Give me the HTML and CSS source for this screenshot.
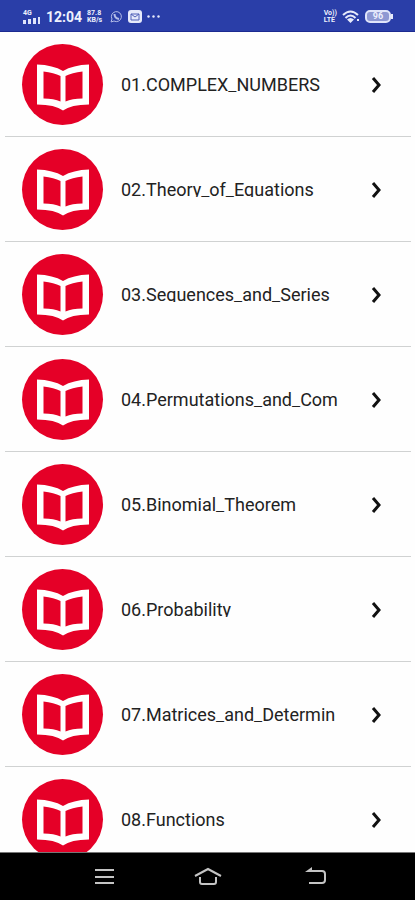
FILE: index.html
```
<!doctype html>
<html lang="en">
	<head>
		<meta charset="UTF-8">
		<meta name="viewport" content="width=device-width, initial-scale=1">
		<title>Chapters</title>
		<link rel="stylesheet" href="styles.css">
	</head>
	<body>
		<!-- shared icons -->
		<svg class="sprite" aria-hidden="true">
			<symbol id="book" viewBox="0 0 81 81">
				<path fill="#fff" fill-rule="evenodd" d="M15 20.500Q31 21 41 27Q51 21 67 20.500V60.500Q49 60.500 41 66.500Q33 60.500 15 60.500ZM21.500 27.500V54.500Q32 54.500 38.500 57.500V32Q32 28.500 21.500 27.500ZM60.500 27.500Q50 28.500 43.500 32V57.500Q50 54.500 60.500 54.500Z"/>
			</symbol>
			<symbol id="chevron" viewBox="0 0 12 18">
				<path fill="none" stroke="#111" stroke-width="3" d="M2 2L8 9L2 16"/>
			</symbol>
		</svg>
		<header class="status">
			<div class="status-group">
				<div class="network">
					<span class="tiny">4G</span>
					<svg width="18" height="7" viewBox="0 0 18 7" fill="#dfe4fa">
						<path d="M0 3h3v4H0zM5 2h3v5H5zM10 1h3v6h-3zM15 0h2v7h-2z"/>
					</svg>
				</div>
				<span class="clock">12:04</span>
				<div class="speed tiny"><span>87.8</span><span>KB/s</span></div>
				<svg class="chat" width="13" height="13" viewBox="0 0 13 13" fill="none" stroke="#b4bde8">
					<path d="M1 12L2 9A5 5 0 1 1 4 11Z"/>
					<path stroke-width="2" d="M4.500 4C4.500 7 6 8.500 9 9"/>
				</svg>
				<svg class="mail" width="14" height="13" viewBox="0 0 14 13">
					<rect width="14" height="13" rx="3" fill="#e6eafb"/>
					<path fill="none" stroke="#5060b8" d="M3 4h8v6H3zM3 4l4 3l4-3"/>
				</svg>
				<svg width="13" height="3" viewBox="0 0 13 3" fill="#e6eafb">
					<circle cx="1.500" cy="1.500" r="1.200"/><circle cx="6.500" cy="1.500" r="1.200"/><circle cx="11.500" cy="1.500" r="1.200"/>
				</svg>
			</div>
			<div class="status-group">
				<div class="volte tiny"><span>Vo))</span><span>LTE</span></div>
				<svg width="18" height="14" viewBox="0 0 18 14" fill="none" stroke="#e6eafb" stroke-width="2">
					<path d="M1 5Q8.500-2 16 5M3.500 8Q8.500 3 13.500 8"/>
					<path fill="#e6eafb" stroke="none" d="M5 9.500Q8.500 6.500 12 9.500L8.500 13ZM15 9h2v2h-2z"/>
				</svg>
				<div class="battery"><span class="level">96</span></div>
			</div>
		</header>
		<main class="content">
			<ul class="chapters">
				<li><a class="chapter" href="#1"><svg class="cover"><use href="#book"/></svg><span class="name">01.COMPLEX_NUMBERS</span><svg class="arrow"><use href="#chevron"/></svg></a></li>
				<li><a class="chapter" href="#2"><svg class="cover"><use href="#book"/></svg><span class="name">02.Theory_of_Equations</span><svg class="arrow"><use href="#chevron"/></svg></a></li>
				<li><a class="chapter" href="#3"><svg class="cover"><use href="#book"/></svg><span class="name">03.Sequences_and_Series</span><svg class="arrow"><use href="#chevron"/></svg></a></li>
				<li><a class="chapter" href="#4"><svg class="cover"><use href="#book"/></svg><span class="name">04.Permutations_and_Com</span><svg class="arrow"><use href="#chevron"/></svg></a></li>
				<li><a class="chapter" href="#5"><svg class="cover"><use href="#book"/></svg><span class="name">05.Binomial_Theorem</span><svg class="arrow"><use href="#chevron"/></svg></a></li>
				<li><a class="chapter" href="#6"><svg class="cover"><use href="#book"/></svg><span class="name">06.Probability</span><svg class="arrow"><use href="#chevron"/></svg></a></li>
				<li><a class="chapter" href="#7"><svg class="cover"><use href="#book"/></svg><span class="name">07.Matrices_and_Determin</span><svg class="arrow"><use href="#chevron"/></svg></a></li>
				<li><a class="chapter" href="#8"><svg class="cover"><use href="#book"/></svg><span class="name">08.Functions</span><svg class="arrow"><use href="#chevron"/></svg></a></li>
			</ul>
		</main>
		<nav class="navbar">
			<button class="key" type="button" aria-label="Menu">
				<svg width="28" height="20" viewBox="0 0 28 20" fill="none" stroke="#c4c4c4" stroke-width="2">
					<path d="M5 3h19M5 10h19M5 16h19"/>
				</svg>
			</button>
			<button class="key" type="button" aria-label="Home">
				<svg width="28" height="20" viewBox="0 0 28 20" fill="none" stroke="#c4c4c4" stroke-width="2">
					<path d="M1 9L14 2L27 9M6 10V15Q6 17 8 17H20Q22 17 22 15V10"/>
				</svg>
			</button>
			<button class="key" type="button" aria-label="Back">
				<svg width="28" height="20" viewBox="0 0 28 20" fill="none" stroke="#c4c4c4" stroke-width="2">
					<path d="M10 4H24Q27 4 27 7V13Q27 16 24 16H11"/>
					<path fill="#c4c4c4" stroke="none" d="M7 5L14 0V5Z"/>
				</svg>
			</button>
		</nav>
	</body>
</html>
```

FILE: styles.css
```
body
{
	display: flex;
	flex-direction: column;
	height: 100vh;
	margin: 0;
	background: #fefefe;
	font-family: Roboto, "Liberation Sans", sans-serif;
}
.sprite
{
	display: none;
}
.status
{
	display: flex;
	flex: none;
	justify-content: space-between;
	align-items: center;
	box-sizing: border-box;
	height: 32px;
	padding: 2px 22px 0 23px;
	border-bottom: 1px solid #1c2a90;
	background: #2a3ea8;
	color: #eef1fd;
}
.status-group
{
	display: flex;
	align-items: center;
	gap: 5px;
}
.tiny
{
	font-size: 7px;
	font-weight: bold;
	line-height: 7px;
}
.network, .speed, .volte
{
	display: flex;
	flex-direction: column;
}
.clock
{
	font-size: 14px;
	font-weight: bold;
	line-height: 16px;
}
.chat
{
	margin: 0 0 0 3px;
}
.battery
{
	display: flex;
	align-items: center;
}
.battery::after
{
	width: 2px;
	height: 5px;
	background: #e6eafb;
	content: "";
}
.level
{
	width: 22px;
	border: 2px solid #dfe4fa;
	border-radius: 5px;
	background: #8e98d3;
	font-size: 9px;
	font-weight: bold;
	line-height: 9px;
	text-align: center;
}
.content
{
	flex: 1;
	min-height: 0;
	overflow: hidden;
}
.chapters
{
	margin: 0;
	padding: 0 4px 0 5px;
	list-style: none;
}
.chapter
{
	display: flex;
	align-items: center;
	padding: 12px 28px 11px 17px;
	border-bottom: 1px solid #d0d2d2;
	color: #222;
	text-decoration: none;
}
.cover
{
	flex: none;
	width: 81px;
	height: 81px;
	margin-right: 18px;
	border-radius: 50%;
	background: #e50027;
}
/* one line only, the tails of the letters are cut */
.name
{
	flex: 1;
	height: 15px;
	overflow: hidden;
	font-size: 18px;
	line-height: 16px;
	white-space: nowrap;
}
.arrow
{
	flex: none;
	width: 12px;
	height: 18px;
}
.navbar
{
	display: flex;
	flex: none;
	justify-content: center;
	align-items: center;
	gap: 76px;
	height: 47px;
	border-top: 1px solid #777;
	background: #000;
}
.key
{
	display: flex;
	padding: 0;
	border: 0;
	background: none;
}
```
